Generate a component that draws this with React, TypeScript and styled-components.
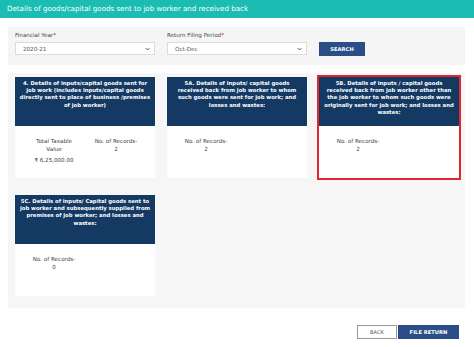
import React from 'react';
import styled, { createGlobalStyle } from 'styled-components';

const GlobalStyle = createGlobalStyle`
  html, body {
    margin: 0;
    padding: 0;
    background: #ffffff;
    font-family: "DejaVu Sans", Verdana, sans-serif;
  }
`;

const Page = styled.div`
  width: 474px;
  height: 347px;
  overflow: hidden;
`;

const TitleBar = styled.div`
  height: 18px;
  background: #1bbdb3;
  color: #ffffff;
  font-size: 7.1px;
  line-height: 18px;
  padding-left: 7px;
`;

const Content = styled.div`
  padding: 9px 9px 0 8px;
`;

const FilterPanel = styled.div`
  background: #f5f5f5;
  height: 38px;
  box-sizing: border-box;
  padding: 4px 7px 0;
  display: flex;
  gap: 12px;
  align-items: flex-start;
`;

const Field = styled.div`
  display: flex;
  flex-direction: column;
  width: 140px;
`;

const Label = styled.label`
  font-size: 5.6px;
  color: #444;
  height: 11px;
  line-height: 9px;
  span {
    color: #d0021b;
  }
`;

const SelectBox = styled.div`
  height: 13px;
  background: #fff;
  border: 1px solid #dcdcdc;
  box-sizing: border-box;
  display: flex;
  align-items: center;
  justify-content: space-between;
  padding: 0 4px 0 7px;
  font-size: 5.6px;
  color: #555;
`;

const PrimaryButton = styled.button<{ $width: number }>`
  width: ${p => p.$width}px;
  height: 14px;
  padding: 0;
  border: 1px solid #2b4d85;
  background: #2c4e87;
  color: #fff;
  font-family: inherit;
  font-size: 5.2px;
  font-weight: bold;
`;

const SearchButton = styled(PrimaryButton)`
  margin-top: 11px;
`;

const CardsPanel = styled.div`
  margin-top: 8px;
  background: #f6f6f6;
  padding: 4px 7px 12px;
  display: grid;
  grid-template-columns: repeat(3, 140px);
  column-gap: 12px;
  row-gap: 17px;
`;

const Card = styled.div<{ $active?: boolean }>`
  background: #fff;
  height: 101px;
  display: flex;
  flex-direction: column;
  outline: ${p => (p.$active ? '2px solid #e0272f' : 'none')};
`;

const CardHeader = styled.div`
  height: 49px;
  background: #143a63;
  color: #fff;
  font-size: 5.3px;
  font-weight: bold;
  line-height: 7.2px;
  text-align: center;
  padding: 3px 4px 0;
  box-sizing: border-box;
`;

const CardBody = styled.div`
  display: flex;
  padding: 11px 8px 0;
`;

const Stat = styled.div`
  width: 62px;
  text-align: center;
  font-size: 5.6px;
  line-height: 8px;
  color: #444;
`;

const Amount = styled.div`
  margin-top: 3px;
`;

const Footer = styled.div`
  display: flex;
  justify-content: flex-end;
  gap: 1px;
  margin-top: 17px;
  padding-right: 6px;
`;

const BackButton = styled.button`
  width: 40px;
  height: 14px;
  padding: 0;
  border: 1px solid #9a9a9a;
  background: #fff;
  color: #555;
  font-family: inherit;
  font-size: 5.2px;
`;

const Chevron = () => (
  <svg width="5" height="4" viewBox="0 0 5 4">
    <path d="M0.6 1 L2.5 3 L4.4 1" fill="none" stroke="#555" strokeWidth="0.9" />
  </svg>
);

const cards = [
  {
    title:
      '4. Details of inputs/capital goods sent for job work (includes inputs/capital goods directly sent to place of business /premises of job worker)',
    taxable: '₹ 6,25,000.00',
    records: '2',
  },
  {
    title:
      '5A. Details of inputs/ capital goods received back from job worker to whom such goods were sent for job work; and losses and wastes:',
    records: '2',
  },
  {
    title:
      '5B. Details of inputs / capital goods received back from job worker other than the job worker to whom such goods were originally sent for job work; and losses and wastes:',
    records: '2',
    active: true,
  },
  {
    title:
      '5C. Details of inputs/ Capital goods sent to job worker and subsequently supplied from premises of job worker; and losses and wastes:',
    records: '0',
  },
];

export default function App() {
  return (
    <Page>
      <GlobalStyle />
      <TitleBar>Details of goods/capital goods sent to job worker and received back</TitleBar>
      <Content>
        <FilterPanel>
          <Field>
            <Label>
              Financial Year<span>*</span>
            </Label>
            <SelectBox>
              2020-21
              <Chevron />
            </SelectBox>
          </Field>
          <Field>
            <Label>
              Return Filing Period<span>*</span>
            </Label>
            <SelectBox>
              Oct-Dec
              <Chevron />
            </SelectBox>
          </Field>
          <SearchButton $width={46}>SEARCH</SearchButton>
        </FilterPanel>
        <CardsPanel>
          {cards.map(c => (
            <Card key={c.title} $active={c.active}>
              <CardHeader>{c.title}</CardHeader>
              <CardBody>
                {c.taxable && (
                  <Stat>
                    Total Taxable
                    <br />
                    Value
                    <Amount>{c.taxable}</Amount>
                  </Stat>
                )}
                <Stat>
                  No. of Records-
                  <br />
                  {c.records}
                </Stat>
              </CardBody>
            </Card>
          ))}
        </CardsPanel>
        <Footer>
          <BackButton>BACK</BackButton>
          <PrimaryButton $width={61}>FILE RETURN</PrimaryButton>
        </Footer>
      </Content>
    </Page>
  );
}
